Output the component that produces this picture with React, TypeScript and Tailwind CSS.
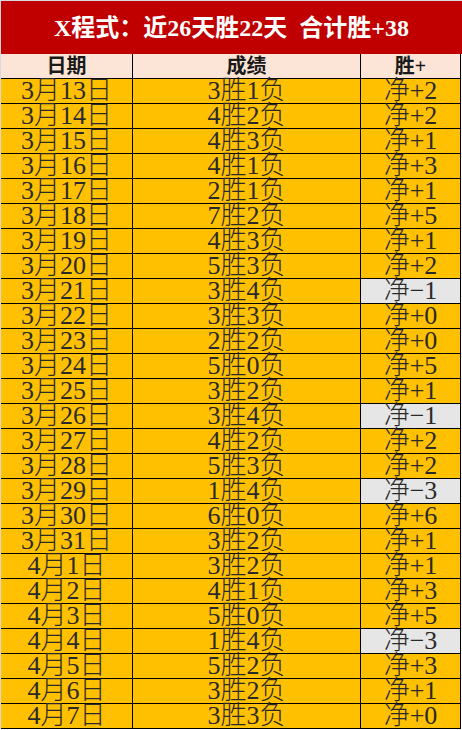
import React from "react";

const rows: [string, string, string][] = [
  ["3月13日", "3胜1负", "净+2"],
  ["3月14日", "4胜2负", "净+2"],
  ["3月15日", "4胜3负", "净+1"],
  ["3月16日", "4胜1负", "净+3"],
  ["3月17日", "2胜1负", "净+1"],
  ["3月18日", "7胜2负", "净+5"],
  ["3月19日", "4胜3负", "净+1"],
  ["3月20日", "5胜3负", "净+2"],
  ["3月21日", "3胜4负", "净−1"],
  ["3月22日", "3胜3负", "净+0"],
  ["3月23日", "2胜2负", "净+0"],
  ["3月24日", "5胜0负", "净+5"],
  ["3月25日", "3胜2负", "净+1"],
  ["3月26日", "3胜4负", "净−1"],
  ["3月27日", "4胜2负", "净+2"],
  ["3月28日", "5胜3负", "净+2"],
  ["3月29日", "1胜4负", "净−3"],
  ["3月30日", "6胜0负", "净+6"],
  ["3月31日", "3胜2负", "净+1"],
  ["4月1日", "3胜2负", "净+1"],
  ["4月2日", "4胜1负", "净+3"],
  ["4月3日", "5胜0负", "净+5"],
  ["4月4日", "1胜4负", "净−3"],
  ["4月5日", "5胜2负", "净+3"],
  ["4月6日", "3胜2负", "净+1"],
  ["4月7日", "3胜3负", "净+0"],
];

const font = { fontFamily: '"Liberation Serif", "Noto Sans CJK SC", serif' };

const cell =
  "h-[25px] border-b border-r border-black flex items-center justify-center text-[26px] leading-none font-light text-[#2a2a2a] whitespace-nowrap";

export default function App() {
  return (
    <div className="w-[462px] h-[730px] bg-white overflow-hidden" style={font}>
      <div className="h-[54px] border-t border-t-[#d9d9d9] border-l border-l-[#d9d9d9] bg-[#C00000] flex items-center justify-center">
        <span className="text-white font-bold text-[24px] leading-none whitespace-pre">
          X程式：近26天胜22天  合计胜+38
        </span>
      </div>
      <div className="border-l border-l-[#d9d9d9] w-[461px] grid grid-cols-[132px_228px_100px]">
        {["日期", "成绩", "胜+"].map((h) => (
          <div
            key={h}
            className="h-[25px] bg-[#FCE4D6] border-b border-r border-black flex items-center justify-center text-[20px] font-bold text-[#1a1a1a] leading-none"
          >
            {h}
          </div>
        ))}
        {rows.map(([d, r, n]) => {
          const neg = n.includes("−");
          return (
            <React.Fragment key={d}>
              <div className={`${cell} bg-[#FFC000]`}>{d}</div>
              <div className={`${cell} bg-[#FFC000]`}>{r}</div>
              <div className={`${cell} ${neg ? "bg-[#E7E6E6]" : "bg-[#FFC000]"}`}>{n}</div>
            </React.Fragment>
          );
        })}
      </div>
    </div>
  );
}
